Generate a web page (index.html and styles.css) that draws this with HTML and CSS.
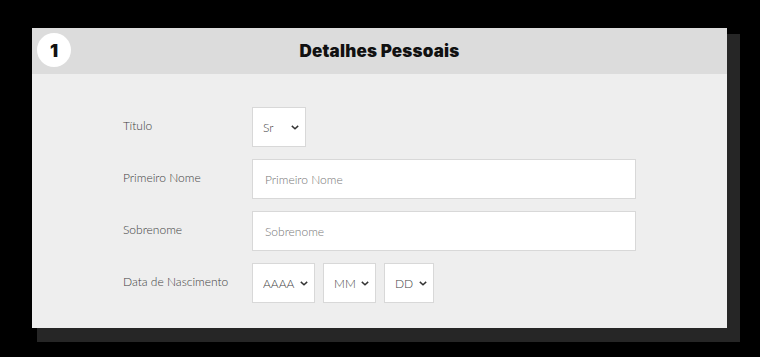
FILE: index.html
```html
<!DOCTYPE html>
<html lang="pt">
<head>
    <meta charset="UTF-8">
    <meta name="viewport" content="width=device-width, initial-scale=1.0">
    <title>Detalhes Pessoais</title>
    <link rel="stylesheet" href="styles.css">
</head>
<body>
    <div class="card">
        <div class="card-header">
            <div class="step">1</div>
            <h2 class="title">Detalhes Pessoais</h2>
        </div>
        <form class="form">
            <div class="row">
                <label class="label">Título</label>
                <div class="select-wrap w-title">
                    <select class="select"><option>Sr</option></select>
                    <svg class="chevron" viewBox="0 0 10 6"><path d="M1 1l4 3.6L9 1" fill="none" stroke="#333" stroke-width="1.8"/></svg>
                </div>
            </div>
            <div class="row">
                <label class="label">Primeiro Nome</label>
                <input class="input" type="text" placeholder="Primeiro Nome">
            </div>
            <div class="row">
                <label class="label">Sobrenome</label>
                <input class="input" type="text" placeholder="Sobrenome">
            </div>
            <div class="row">
                <label class="label">Data de Nascimento</label>
                <div class="date">
                    <div class="select-wrap w-year">
                        <select class="select"><option>AAAA</option></select>
                        <svg class="chevron" viewBox="0 0 10 6"><path d="M1 1l4 3.6L9 1" fill="none" stroke="#333" stroke-width="1.8"/></svg>
                    </div>
                    <div class="select-wrap w-month">
                        <select class="select"><option>MM</option></select>
                        <svg class="chevron" viewBox="0 0 10 6"><path d="M1 1l4 3.6L9 1" fill="none" stroke="#333" stroke-width="1.8"/></svg>
                    </div>
                    <div class="select-wrap w-day">
                        <select class="select"><option>DD</option></select>
                        <svg class="chevron" viewBox="0 0 10 6"><path d="M1 1l4 3.6L9 1" fill="none" stroke="#333" stroke-width="1.8"/></svg>
                    </div>
                </div>
            </div>
        </form>
    </div>
</body>
</html>
```

FILE: styles.css
```css
body {
    margin: 0;
    background: #000;
    font-family: Lato, "Open Sans", sans-serif;
    padding: 28px 0 0 32px;
    height: 357px;
    box-sizing: border-box;
}

.card {
    width: 695px;
    background: #eeeeee;
    box-shadow: 9px 10px 0 4px #262626;
}

.card-header {
    position: relative;
    height: 46px;
    background: #dcdcdc;
    display: flex;
    align-items: center;
    justify-content: center;
}

.step {
    position: absolute;
    left: 5px;
    top: 5px;
    width: 34px;
    height: 34px;
    border-radius: 50%;
    background: #fff;
    display: flex;
    align-items: center;
    justify-content: center;
    font-family: Inter, Roboto, sans-serif;
    font-weight: 900;
    font-size: 18px;
    color: #111;
}

.title {
    margin: 0;
    font-family: Inter, Roboto, sans-serif;
    font-size: 17px;
    font-weight: 900;
    color: #111;
    letter-spacing: 0.2px;
}

.form {
    display: flex;
    flex-direction: column;
    gap: 12px;
    padding: 33px 0 25px 91px;
}

.row {
    display: flex;
    align-items: center;
    height: 40px;
}

.label {
    width: 129px;
    font-size: 12px;
    font-weight: 300;
    color: #3f3f3f;
    margin-top: -3px;
}

.input {
    width: 384px;
    height: 40px;
    box-sizing: border-box;
    border: 1px solid #d8d8d8;
    background: #fff;
    padding: 0 12px;
    font-family: inherit;
    font-size: 12px;
    font-weight: 300;
    color: #333;
    outline: none;
}

.input::placeholder {
    color: #777;
}

.date {
    display: flex;
    gap: 8px;
}

.select-wrap {
    position: relative;
    height: 40px;
}

.select {
    appearance: none;
    -webkit-appearance: none;
    width: 100%;
    height: 40px;
    border: 1px solid #d8d8d8;
    background: #fff;
    border-radius: 0;
    padding: 0 0 0 10px;
    font-family: inherit;
    font-size: 12px;
    font-weight: 300;
    color: #444;
    outline: none;
}

.chevron {
    position: absolute;
    right: 7px;
    top: 18px;
    width: 8px;
    height: 5px;
    pointer-events: none;
}

.w-title { width: 54px; }
.w-year { width: 63px; }
.w-month { width: 53px; }
.w-day { width: 50px; }
```
